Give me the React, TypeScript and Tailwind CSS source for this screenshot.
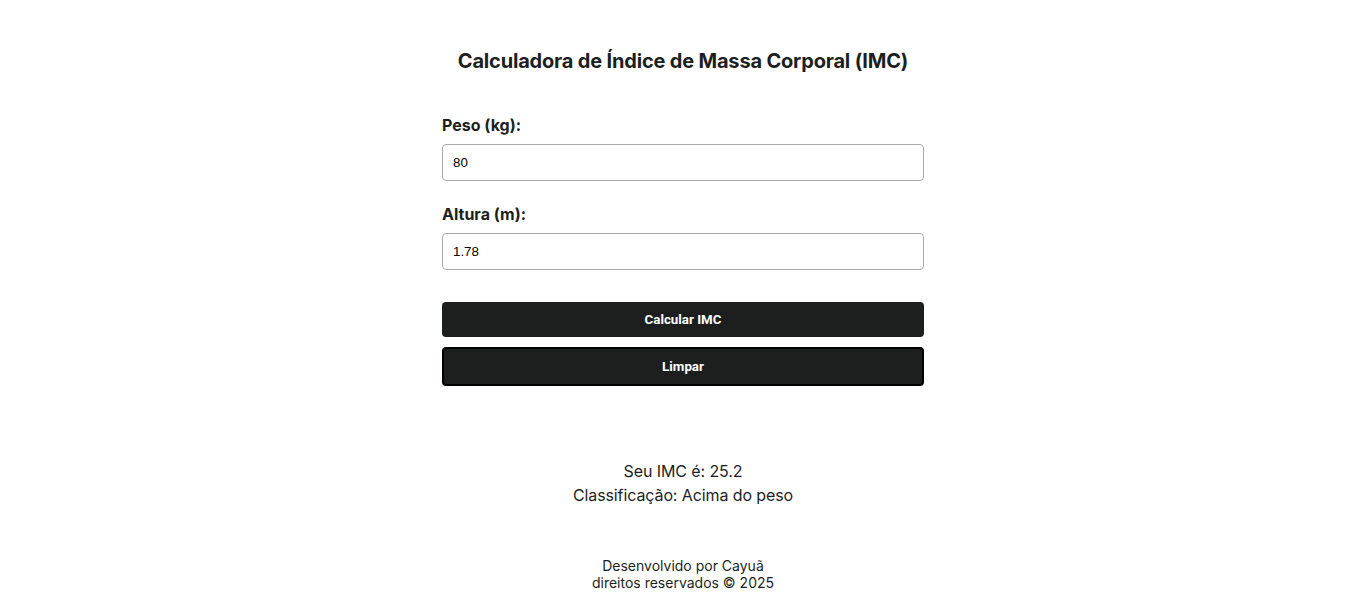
export default function App() {
  return (
    <div className="min-h-screen bg-white text-[#1c1f1d] flex flex-col items-center" style={{ fontFamily: 'Inter, "Noto Sans", sans-serif' }}>
      <div className="w-[482px] pt-[48px]">
        <h1 className="text-center text-xl font-bold leading-[26px] tracking-[-0.18px]">Calculadora de Índice de Massa Corporal (IMC)</h1>

        <form className="mt-[41px] flex flex-col">
          <label className="font-bold text-base leading-[20px]">Peso (kg):</label>
          <input
            defaultValue="80"
            className="mt-[9px] h-[37px] w-full rounded-[4px] border border-[#a9a9a9] px-[10px] text-[13.33px] text-black outline-none"
            style={{ fontFamily: '"Liberation Sans", Arial, sans-serif' }}
          />

          <label className="mt-[23px] font-bold text-base leading-[20px]">Altura (m):</label>
          <input
            defaultValue="1.78"
            className="mt-[9px] h-[37px] w-full rounded-[4px] border border-[#a9a9a9] px-[10px] text-[13.33px] text-black outline-none"
            style={{ fontFamily: '"Liberation Sans", Arial, sans-serif' }}
          />

          <button
            type="button"
            className="mt-[32px] h-[35px] w-full rounded-[4px] bg-[#1c1f1d] text-[13.33px] font-bold text-white"
            style={{ fontFamily: 'Roboto, "Liberation Sans", sans-serif' }}
          >
            Calcular IMC
          </button>
          <button
            type="button"
            className="mt-[10px] h-[39px] w-full rounded-[4px] border-2 border-black bg-[#1c1f1d] text-[13.33px] font-bold text-white"
            style={{ fontFamily: 'Roboto, "Liberation Sans", sans-serif' }}
          >
            Limpar
          </button>
        </form>

        <div className="mt-[75px] flex flex-col items-center gap-[4px] text-base leading-[20px] tracking-[-0.1px]">
          <p>Seu IMC é: 25.2</p>
          <p>Classificação: Acima do peso</p>
        </div>
      </div>

      <footer className="mt-[52px] text-center text-sm leading-[17px]">
        <p>Desenvolvido por Cayuã</p>
        <p>direitos reservados © 2025</p>
      </footer>
    </div>
  );
}
